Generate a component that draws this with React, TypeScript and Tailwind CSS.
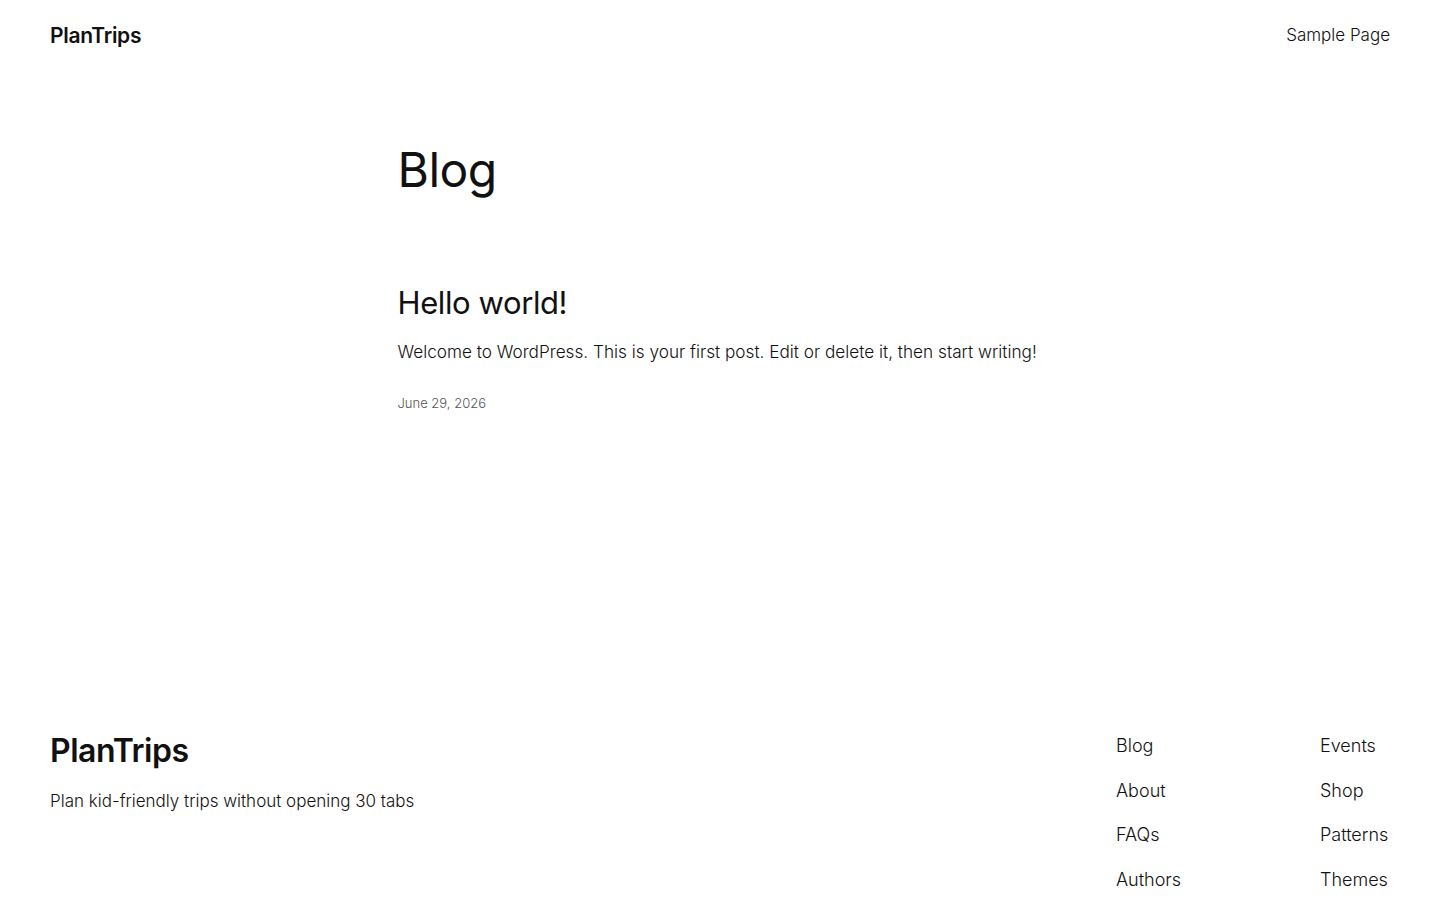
const headerLinks = ["Sample Page"];
const footerLeft = ["Blog", "About", "FAQs", "Authors"];
const footerRight = ["Events", "Shop", "Patterns", "Themes"];

const App = () => {
  return (
    <div
      className="min-h-screen w-full bg-white text-[#111111]"
      style={{ fontFamily: "Inter, 'Noto Sans', sans-serif" }}
    >
      <header className="h-[72px] px-[50px] flex items-center justify-between">
        <a className="text-[21px] font-semibold tracking-[-0.3px]">PlanTrips</a>
        <nav className="flex gap-6">
          {headerLinks.map((l) => (
            <a key={l} className="text-[17px] font-light">
              {l}
            </a>
          ))}
        </nav>
      </header>

      <main className="w-[645px] mx-auto">
        <h1 className="mt-[69px] text-[48px] leading-[1.2] font-normal tracking-[-0.5px]">
          Blog
        </h1>

        <article className="mt-[85px]">
          <h2 className="text-[31px] leading-[1.2] font-normal tracking-[-0.4px]">
            Hello world!
          </h2>
          <p className="mt-[17px] text-[17.2px] leading-[1.6] font-light">
            Welcome to WordPress. This is your first post. Edit or delete it, then start writing!
          </p>
          <div className="mt-[29px] text-[13px] leading-[1.4] font-light text-[#555555]">
            June 29, 2026
          </div>
        </article>
      </main>

      <footer className="mt-[320px] px-[50px] pb-[10px] flex justify-between">
        <div>
          <div className="text-[32px] leading-[1.2] font-semibold tracking-[-0.5px]">
            PlanTrips
          </div>
          <p className="mt-[17px] text-[17px] leading-[1.6] font-light">
            Plan kid-friendly trips without opening 30 tabs
          </p>
        </div>
        <div className="flex">
          <ul className="w-[204px] flex flex-col gap-[15.7px]">
            {footerLeft.map((l) => (
              <li key={l} className="text-[18px] leading-[1.6] font-light">
                {l}
              </li>
            ))}
          </ul>
          <ul className="w-[70px] flex flex-col gap-[15.7px]">
            {footerRight.map((l) => (
              <li key={l} className="text-[18px] leading-[1.6] font-light whitespace-nowrap">
                {l}
              </li>
            ))}
          </ul>
        </div>
      </footer>
    </div>
  );
};

export default App;
